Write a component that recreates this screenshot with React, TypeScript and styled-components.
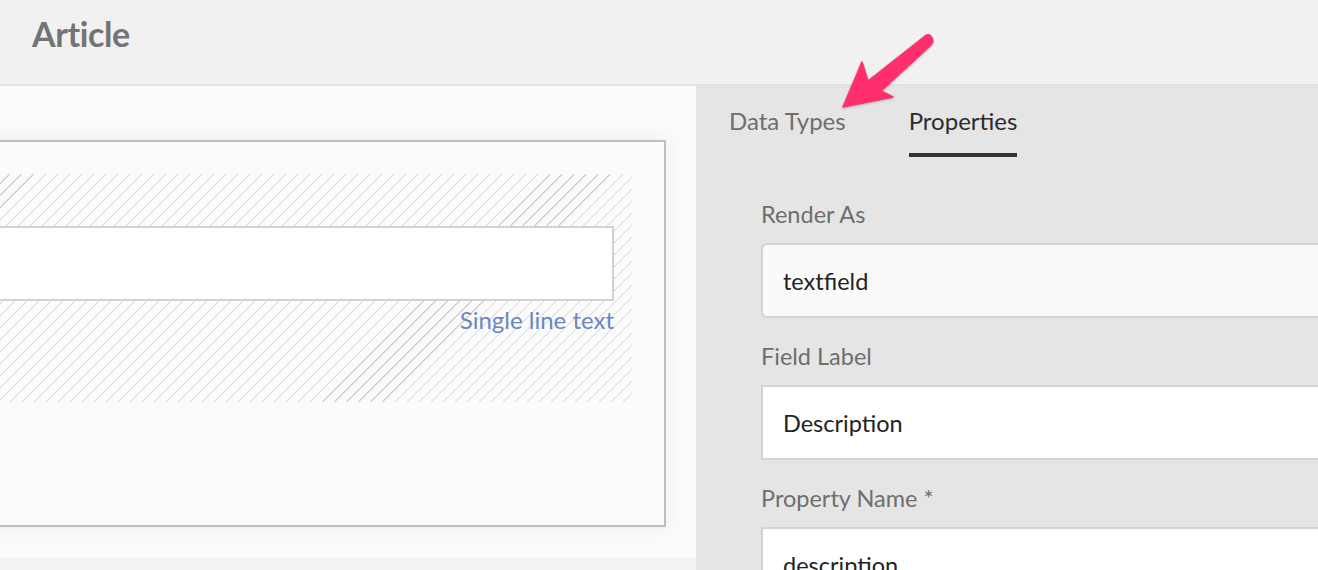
import React from "react";
import styled, { createGlobalStyle } from "styled-components";

const GlobalStyle = createGlobalStyle`
  html, body { margin: 0; padding: 0; }
  body {
    font-family: Lato, "Open Sans", "Liberation Sans", sans-serif;
    background: #f1f1f1;
    overflow: hidden;
  }
  * { box-sizing: border-box; }
`;

const Page = styled.div`
  position: relative;
  width: 1318px;
  height: 570px;
  overflow: hidden;
  display: grid;
  grid-template-rows: 86px 1fr;
`;

const Header = styled.header`
  background: #f1f1f1;
  border-bottom: 2px solid #e2e2e2;
  padding: 14px 0 0 32px;
`;

const Title = styled.h1`
  margin: 0;
  font-size: 34px;
  line-height: 40px;
  font-weight: 700;
  color: #747474;
  letter-spacing: -0.4px;
`;

const Body = styled.div`
  display: grid;
  grid-template-columns: 696px 1fr;
  min-height: 0;
`;

const LeftPane = styled.section`
  background: #f3f3f3;
  display: flex;
  flex-direction: column;
  overflow: hidden;
`;

const Canvas = styled.div`
  height: 472px;
  background: #fbfbfb;
  padding-top: 54px;
`;

const Card = styled.div`
  margin-left: -40px;
  width: 706px;
  height: 387px;
  border: 2px solid #bfbfbf;
  background: #fbfbfb;
  box-shadow: 0 0 18px rgba(0, 0, 0, 0.07);
  padding: 32px 32px 0 0;
`;

const Hatch = styled.div`
  height: 228px;
  padding: 52px 18px 0 0;
  background-color: #fbfbfb;
  background-image: repeating-linear-gradient(
    135deg,
    transparent 0 7.7px,
    #d2d2d2 7.7px 8.5px
  );
`;

const FieldBox = styled.div`
  height: 75px;
  border: 2px solid #d2d2d2;
  background: #ffffff;
`;

const Caption = styled.div`
  text-align: right;
  font-size: 24px;
  line-height: 26px;
  color: #6a87c2;
  margin-top: 6px;
`;

const RightPane = styled.section`
  background: #e5e5e5;
  overflow: hidden;
`;

const Tabs = styled.nav`
  display: flex;
  gap: 63px;
  padding-left: 33px;
`;

const Tab = styled.div<{ $active?: boolean }>`
  padding: 20px 0 17px;
  font-size: 24px;
  line-height: 30px;
  color: ${(p) => (p.$active ? "#2c2c2c" : "#6e6e6e")};
  border-bottom: 4px solid ${(p) => (p.$active ? "#333333" : "transparent")};
`;

const Form = styled.div`
  padding: 45px 0 0 65px;
  display: flex;
  flex-direction: column;
  gap: 26px;
`;

const Field = styled.div`
  display: flex;
  flex-direction: column;
  gap: 16px;
`;

const Label = styled.label`
  font-size: 23.5px;
  line-height: 25px;
  color: #6e6e6e;
`;

const Input = styled.div<{ $rounded?: boolean }>`
  width: 620px;
  height: 75px;
  display: flex;
  align-items: center;
  padding-left: 20px;
  border: 2px solid #d3d3d3;
  border-radius: ${(p) => (p.$rounded ? "6px" : "0")};
  background: ${(p) => (p.$rounded ? "#fafafa" : "#ffffff")};
  font-size: 23.5px;
  color: #222222;
`;

const ArrowOverlay = styled.svg`
  position: absolute;
  left: 830px;
  top: 30px;
  width: 110px;
  height: 90px;
  overflow: visible;
  filter: drop-shadow(0 1px 1px rgba(0, 0, 0, 0.25));
`;

const fields = [
  { label: "Render As", value: "textfield", rounded: true },
  { label: "Field Label", value: "Description", rounded: false },
  { label: "Property Name *", value: "description", rounded: false },
];

export default function App() {
  return (
    <>
      <GlobalStyle />
      <Page>
        <Header>
          <Title>Article</Title>
        </Header>
        <Body>
          <LeftPane>
            <Canvas>
              <Card>
                <Hatch>
                  <FieldBox />
                  <Caption>Single line text</Caption>
                </Hatch>
              </Card>
            </Canvas>
          </LeftPane>
          <RightPane>
            <Tabs>
              <Tab>Data Types</Tab>
              <Tab $active>Properties</Tab>
            </Tabs>
            <Form>
              {fields.map((f) => (
                <Field key={f.label}>
                  <Label>{f.label}</Label>
                  <Input $rounded={f.rounded}>{f.value}</Input>
                </Field>
              ))}
            </Form>
          </RightPane>
        </Body>
        <ArrowOverlay viewBox="830 30 110 90">
          <path
            d="M 843 107 L 862 62 L 868 81 L 925 36 Q 930 33 932 38 Q 934 42 931 45 L 881 91 L 893 97 Z"
            fill="#ff2f6e"
            stroke="#ff2f6e"
            strokeWidth="1.5"
            strokeLinejoin="round"
          />
        </ArrowOverlay>
      </Page>
    </>
  );
}
